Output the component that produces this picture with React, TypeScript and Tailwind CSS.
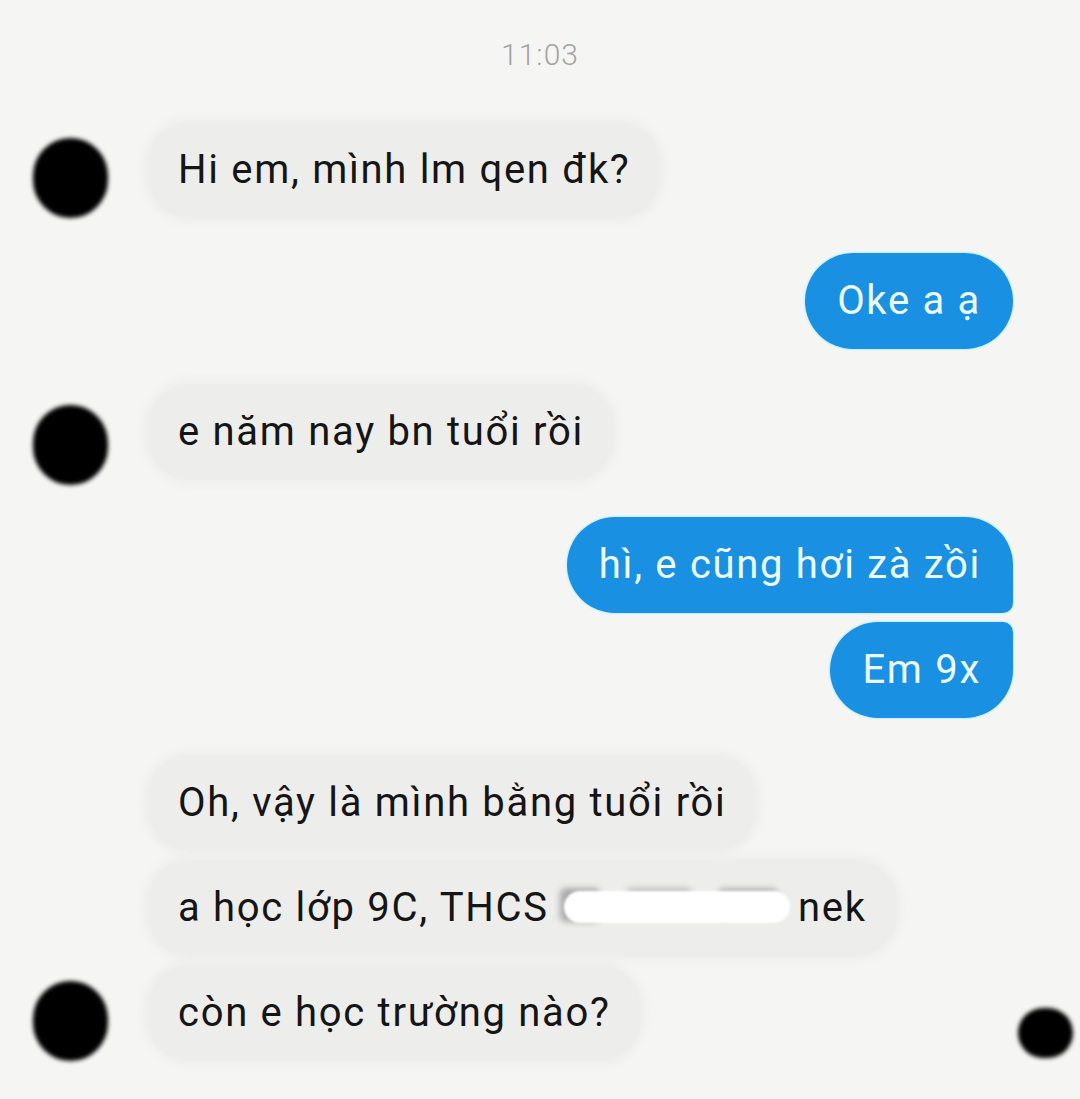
import { FunctionComponent, ReactNode } from "react";

const font = { fontFamily: "Roboto, 'Noto Sans', sans-serif" };

const Avatar = () => (
  <div className="w-[148px] shrink-0 flex justify-start pl-[33px]">
    <div className="w-[75px] h-[80px] rounded-full bg-black blur-[2px]" />
  </div>
);

const Gray: FunctionComponent<{ children: ReactNode }> = ({ children }) => (
  <div className="h-[96px] flex items-center px-[30px] rounded-[42px] bg-[#ededec] shadow-[0_0_10px_4px_#ededec] text-[40px] leading-[48px] tracking-[1.7px] text-[#151515] whitespace-nowrap">
    <span>{children}</span>
  </div>
);

const Blue: FunctionComponent<{ children: ReactNode; shape: string }> = ({
  children,
  shape,
}) => (
  <div
    className={
      "h-[96px] flex items-center px-[32px] bg-[#1a90e2] text-[40px] leading-[48px] tracking-[1.7px] text-[#eafcff] whitespace-nowrap shadow-[0_0_2px_1px_#bfeeff] " +
      shape
    }
  >
    <span>{children}</span>
  </div>
);

const App = () => {
  return (
    <div
      className="w-[1080px] h-[1099px] bg-[#f5f6f4] overflow-hidden flex flex-col"
      style={font}
    >
      <div className="pt-[39px] h-[71px] text-center text-[30px] leading-[32px] tracking-[1px] text-[#a3a3a3] font-light">
        11:03
      </div>

      <div className="mt-[51px] flex items-end">
        <Avatar />
        <Gray>Hi em, mình lm qen đk?</Gray>
      </div>

      <div className="mt-[35px] flex justify-end pr-[67px]">
        <Blue shape="rounded-full">Oke a ạ</Blue>
      </div>

      <div className="mt-[35px] flex items-end">
        <div className="w-[148px] shrink-0 flex pl-[33px]">
          <div className="w-[75px] h-[80px] rounded-full bg-black blur-[2px] mb-[-5px]" />
        </div>
        <Gray>e năm nay bn tuổi rồi</Gray>
      </div>

      <div className="mt-[37px] flex justify-end pr-[67px]">
        <Blue shape="rounded-l-[48px] rounded-tr-[48px] rounded-br-[10px]">
          hì, e cũng hơi zà zồi
        </Blue>
      </div>

      <div className="mt-[9px] flex justify-end pr-[67px]">
        <Blue shape="rounded-l-[48px] rounded-tr-[10px] rounded-br-[48px]">
          Em 9x
        </Blue>
      </div>

      <div className="mt-[37px] flex pl-[148px]">
        <Gray>Oh, vậy là mình bằng tuổi rồi</Gray>
      </div>

      <div className="mt-[9px] flex pl-[148px]">
        <Gray>
          a học lớp 9C, THCS{" "}
          <span className="relative inline-block w-[226px] h-[48px] align-top">
            <span className="absolute left-0 top-[4px] flex gap-[26px] blur-[3px]">
              <span className="w-[40px] h-[34px] rounded-md bg-[#a9a9a9]" />
              <span className="w-[66px] h-[28px] rounded-md bg-[#bdbdbd]" />
              <span className="w-[60px] h-[28px] rounded-md bg-[#b3b3b3]" />
            </span>
            <span className="absolute left-[4px] right-[-4px] top-[7px] h-[32px] rounded-full bg-white blur-[1px]" />
          </span>{" "}
          nek
        </Gray>
      </div>

      <div className="mt-[9px] flex items-end">
        <Avatar />
        <Gray>còn e học trường nào?</Gray>
        <div className="ml-auto mr-[7px] mb-[3px] w-[55px] h-[50px] rounded-full bg-black blur-[2px]" />
      </div>
    </div>
  );
};

export default App;
